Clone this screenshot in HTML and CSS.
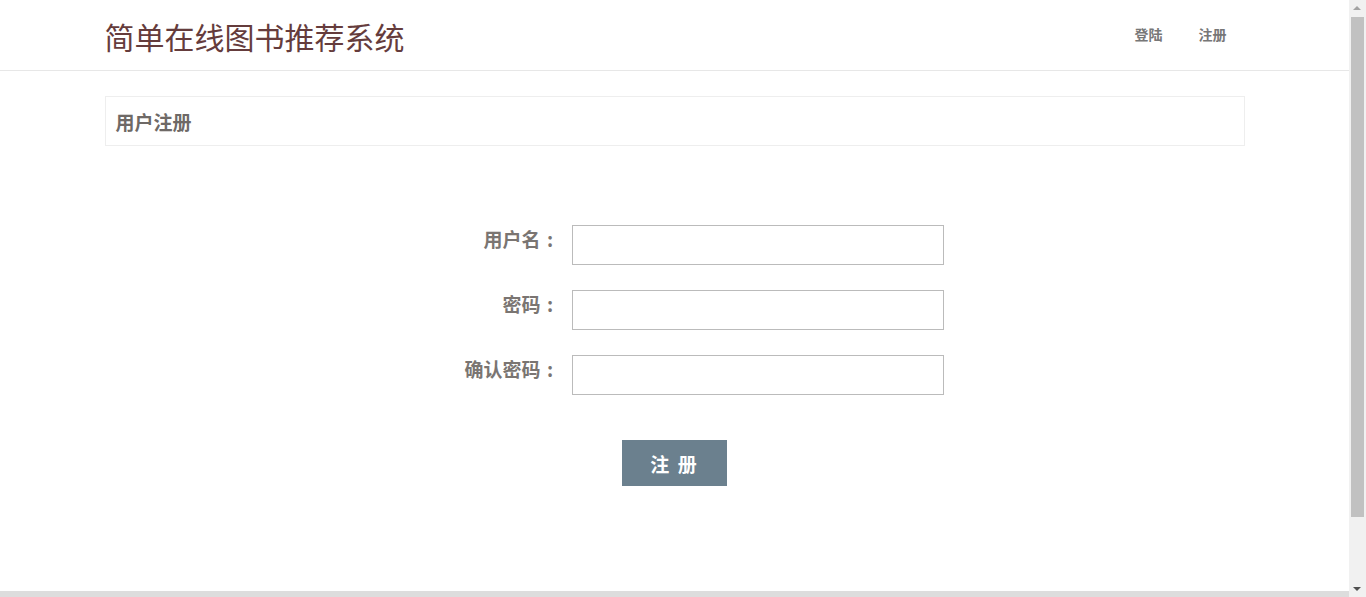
FILE: index.html
```html
<!DOCTYPE html>
<html lang="zh-CN">
<head>
<meta charset="utf-8">
<title>简单在线图书推荐系统</title>
<link rel="stylesheet" href="styles.css">
</head>
<body>
<header class="topbar">
  <div class="container topbar-inner">
    <a class="brand" href="#">简单在线图书推荐系统</a>
    <nav class="nav">
      <a href="#">登陆</a>
      <a href="#">注册</a>
    </nav>
  </div>
</header>
<main class="container">
  <div class="panel">
    <h3 class="panel-title">用户注册</h3>
  </div>
  <form class="reg-form">
    <div class="row">
      <label class="label" for="u">用户名<span class="colon">:</span></label>
      <input class="input" id="u" type="text">
    </div>
    <div class="row">
      <label class="label" for="p">密码<span class="colon">:</span></label>
      <input class="input" id="p" type="password">
    </div>
    <div class="row">
      <label class="label" for="p2">确认密码<span class="colon">:</span></label>
      <input class="input" id="p2" type="password">
    </div>
    <div class="actions">
      <button class="btn" type="button">注 册</button>
    </div>
  </form>
</main>
<footer class="footer"></footer>
<div class="scrollbar" aria-hidden="true">
  <div class="sb-arrow sb-up"></div>
  <div class="sb-track"><div class="sb-thumb"></div></div>
  <div class="sb-arrow sb-down"></div>
</div>
</body>
</html>
```
FILE: styles.css
```css
html, body {
  margin: 0;
  padding: 0;
}
body {
  font-family: "Noto Sans CJK SC", "Liberation Sans", sans-serif;
  background: #fff;
  color: #666;
  margin-right: 17px;
}
.container {
  width: 1140px;
  margin: 0 auto;
}
.topbar {
  height: 70px;
  border-bottom: 1px solid #e7e7e7;
}
.topbar-inner {
  display: flex;
  align-items: center;
  justify-content: space-between;
  height: 70px;
}
.brand {
  font-size: 30px;
  color: #653c3c;
  text-decoration: none;
  line-height: 1;
  margin-top: 2px;
}
.nav {
  display: flex;
  margin-top: -2px;
}
.nav a {
  font-size: 14px;
  font-weight: 700;
  color: #777;
  text-decoration: none;
  padding: 0 18px;
  line-height: 1;
}
.panel {
  margin-top: 25px;
  border: 1px solid #eee;
  height: 48px;
  display: flex;
  align-items: center;
  padding: 0 10px;
}
.panel-title {
  margin: 0;
  font-size: 19px;
  font-weight: 700;
  color: #6e6966;
}
.reg-form {
  padding-top: 79px;
  display: flex;
  flex-direction: column;
  gap: 25px;
}
.row {
  display: flex;
  align-items: flex-start;
  gap: 12px;
}
.label {
  width: 455px;
  text-align: right;
  font-size: 19px;
  font-weight: 700;
  color: #7a7572;
  line-height: 28px;
}
.colon {
  display: inline-block;
  width: 19px;
  text-align: center;
}
.input {
  width: 372px;
  height: 40px;
  box-sizing: border-box;
  border: 1px solid #bbb;
  margin: 0;
  padding: 0 8px;
  font-size: 16px;
}
.actions {
  display: flex;
  justify-content: center;
  padding-top: 20px;
}
.btn {
  width: 105px;
  height: 46px;
  border: none;
  background: #6b808e;
  color: #fff;
  font-family: "Noto Sans CJK SC", sans-serif;
  font-size: 19px;
  font-weight: 700;
  letter-spacing: 2px;
  padding: 0;
}
.footer {
  margin-top: 105px;
  height: 81px;
  background: #ddd;
}
.scrollbar {
  position: fixed;
  top: 0;
  right: 0;
  bottom: 0;
  width: 17px;
  background: #f1f1f1;
  display: flex;
  flex-direction: column;
}
.sb-arrow {
  height: 17px;
  position: relative;
}
.sb-arrow::after {
  content: "";
  position: absolute;
  left: 4px;
  width: 0;
  height: 0;
  border-left: 4px solid transparent;
  border-right: 4px solid transparent;
}
.sb-up::after {
  top: 6px;
  border-bottom: 4px solid #a3a3a3;
}
.sb-down::after {
  top: 7px;
  border-top: 4px solid #505050;
}
.sb-track {
  flex: 1;
  padding: 0 2px;
}
.sb-thumb {
  height: 500px;
  background: #c1c1c1;
}
```
